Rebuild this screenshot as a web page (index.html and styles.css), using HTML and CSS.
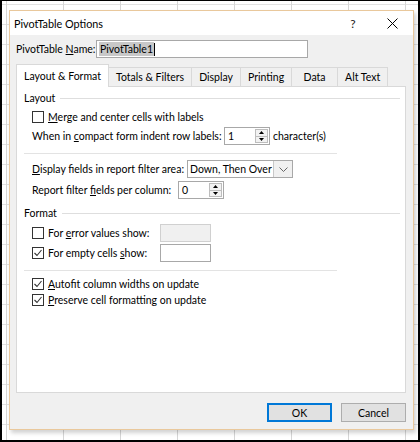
FILE: index.html
```html
<!DOCTYPE html>
<html>
<head>
<meta charset="utf-8">
<title>PivotTable Options</title>
<link rel="stylesheet" href="styles.css">
</head>
<body>
<div class="screen">
  <div class="dialog">
    <div class="titlebar">
      <span class="title">PivotTable Options</span>
      <span class="help">?</span>
      <svg class="close" width="11" height="11" viewBox="0 0 11 11"><path d="M0.5 0.5 L10.5 10.5 M10.5 0.5 L0.5 10.5" stroke="#000" stroke-width="1" fill="none"/></svg>
    </div>
    <div class="body">
      <div class="name-row">
        <span class="name-label">PivotTable <u>N</u>ame:</span>
        <div class="textbox name-box"><span class="sel">PivotTable1</span><span class="caret"></span></div>
      </div>
      <div class="tabs">
        <div class="tab active">Layout &amp; Format</div>
        <div class="tab">Totals &amp; Filters</div>
        <div class="tab">Display</div>
        <div class="tab">Printing</div>
        <div class="tab">Data</div>
        <div class="tab">Alt Text</div>
      </div>
      <div class="panel">
        <div class="group"><span>Layout</span><span class="group-line"></span></div>
        <div class="row indent merge-row">
          <span class="checkbox"></span><span class="cb-label"><u>M</u>erge and center cells with labels</span>
        </div>
        <div class="row indent compact-row">
          <span class="field-label w-compact">When in <u>c</u>ompact form indent row labels:</span>
          <div class="spin"><span class="spin-val">1</span><span class="spin-btns"><span class="spin-btn"><svg width="5" height="3" viewBox="0 0 5 3"><path d="M0 3 L2.5 0 L5 3 Z" fill="#000"/></svg></span><span class="spin-btn"><svg width="5" height="3" viewBox="0 0 5 3"><path d="M0 0 L2.5 3 L5 0 Z" fill="#000"/></svg></span></span></div>
          <span class="after">character(s)</span>
        </div>
        <div class="sep"></div>
        <div class="row indent display-row">
          <span class="field-label w-display"><u>D</u>isplay fields in report filter area:</span>
          <div class="combo"><span class="combo-val">Down, Then Over</span><span class="combo-btn"><svg width="9" height="5" viewBox="0 0 9 5"><path d="M0.5 0.5 L4.5 4.5 L8.5 0.5" stroke="#666" stroke-width="1" fill="none"/></svg></span></div>
        </div>
        <div class="row indent report-row">
          <span class="field-label w-report">Report filter <u>f</u>ields per column:</span>
          <div class="spin"><span class="spin-val">0</span><span class="spin-btns"><span class="spin-btn"><svg width="5" height="3" viewBox="0 0 5 3"><path d="M0 3 L2.5 0 L5 3 Z" fill="#000"/></svg></span><span class="spin-btn"><svg width="5" height="3" viewBox="0 0 5 3"><path d="M0 0 L2.5 3 L5 0 Z" fill="#000"/></svg></span></span></div>
        </div>
        <div class="group format-group"><span>Format</span><span class="group-line"></span></div>
        <div class="row indent error-row">
          <span class="checkbox"></span><span class="cb-label w-cb">For <u>e</u>rror values show:</span>
          <div class="textbox small-box disabled"></div>
        </div>
        <div class="row indent empty-row">
          <span class="checkbox checked"><svg width="10" height="10" viewBox="0 0 10 10"><path d="M1.5 5 L4 7.5 L8.5 2" stroke="#333" stroke-width="1.1" fill="none"/></svg></span><span class="cb-label w-cb">For empty cells <u>s</u>how:</span>
          <div class="textbox small-box"></div>
        </div>
        <div class="sep sep2"></div>
        <div class="row indent short-row autofit-row">
          <span class="checkbox checked"><svg width="10" height="10" viewBox="0 0 10 10"><path d="M1.5 5 L4 7.5 L8.5 2" stroke="#333" stroke-width="1.1" fill="none"/></svg></span><span class="cb-label"><u>A</u>utofit column widths on update</span>
        </div>
        <div class="row indent short-row">
          <span class="checkbox checked"><svg width="10" height="10" viewBox="0 0 10 10"><path d="M1.5 5 L4 7.5 L8.5 2" stroke="#333" stroke-width="1.1" fill="none"/></svg></span><span class="cb-label"><u>P</u>reserve cell formatting on update</span>
        </div>
      </div>
      <div class="buttons">
        <div class="btn default">OK</div>
        <div class="btn">Cancel</div>
      </div>
    </div>
  </div>
</div>
</body>
</html>
```

FILE: styles.css
```css
* { box-sizing: border-box; }
html, body { margin: 0; padding: 0; }
body {
  width: 420px;
  height: 442px;
  font-family: Lato, "Segoe UI", sans-serif;
  font-size: 10.5px;
  color: #000;
  overflow: hidden;
  white-space: nowrap;
}
u { text-decoration: underline; text-underline-offset: 1px; }

.screen {
  width: 420px;
  height: 442px;
  border: solid #000;
  border-width: 1px 2px 2px 2px;
  background-color: #fff;
  background-image:
    linear-gradient(to right, #d6d6d6 1px, transparent 1px),
    linear-gradient(to bottom, #e2e2e2 1px, transparent 1px);
  background-size: 57px 100%, 100% 20px;
  background-position: 4px 0, 0 3px;
  padding: 9px 0 0 7px;
}

.dialog {
  width: 405px;
  height: 420px;
  border: 1px solid #e9c89c;
  background: #f0f0f0;
  box-shadow: 2px 3px 4px rgba(0, 0, 0, 0.18);
  display: flex;
  flex-direction: column;
}

.titlebar {
  height: 24px;
  background: #fff;
  display: flex;
  align-items: center;
  padding-left: 4px;
  flex: none;
}
.title { flex: 1; font-size: 10.8px; }
.help { width: 16px; text-align: center; font-size: 12px; color: #222; margin-right: 26px; }
.close { margin-right: 15px; }

.body {
  flex: 1;
  display: flex;
  flex-direction: column;
  padding: 5px 7px 7px 6px;
}

.name-row { display: flex; align-items: center; height: 18px; }
.name-label { width: 80px; }
.textbox {
  height: 18px;
  border: 1px solid #a8a8a8;
  background: #fff;
  display: flex;
  align-items: center;
}
.name-box { width: 212px; padding-left: 2px; }
.sel { background: #c8c8c8; padding: 0 1px; line-height: 14px; }
.caret { width: 1px; height: 13px; background: #000; }

.tabs {
  display: flex;
  align-items: flex-end;
  margin-top: 6px;
  height: 23px;
  border-bottom: 1px solid #d9d9d9;
  flex: none;
}
.tab {
  height: 19px;
  min-width: 47px;
  border: 1px solid #d9d9d9;
  border-bottom: none;
  margin-left: -1px;
  padding: 0 7px;
  display: flex;
  align-items: center;
  justify-content: center;
  background: #f0f0f0;
}
.tab.active {
  height: 23px;
  margin-left: 0;
  margin-bottom: -1px;
  background: #fff;
}

.panel {
  flex: none;
  height: 306px;
  background: #fff;
  border: 1px solid #d9d9d9;
  border-top: none;
  padding: 3px 5px 0 7px;
}

.group { display: flex; align-items: center; height: 16px; gap: 5px; }
.group-line { flex: 1; height: 1px; background: #dedede; }
.format-group { margin-top: 6px; }

.row { display: flex; align-items: center; height: 18px; }
.indent { padding-left: 8px; }
.merge-row { margin-top: 2px; }
.compact-row { height: 20px; }
.display-row { margin-top: 6px; }
.report-row { margin-top: 3px; }
.error-row { margin-top: 3px; }
.empty-row { margin-top: 2px; }
.short-row { height: 16px; }
.autofit-row { margin-top: 5px; }

.checkbox {
  width: 12px;
  height: 12px;
  border: 1px solid #333;
  background: #fff;
  display: flex;
  align-items: center;
  justify-content: center;
  flex: none;
}
.cb-label { margin-left: 4px; }
.w-cb { width: 112px; }

.field-label { flex: none; }
.w-compact { width: 192px; }
.w-display { width: 155px; }
.w-report { width: 146px; }

.spin {
  width: 46px;
  height: 18px;
  border: 1px solid #a8a8a8;
  background: #fff;
  display: flex;
  align-items: center;
  padding-right: 1px;
}
.spin-val { flex: 1; padding-left: 3px; }
.spin-btns { display: flex; flex-direction: column; width: 13px; height: 14px; }
.spin-btn {
  flex: 1;
  background: #f2f2f2;
  border: 1px solid #bdbdbd;
  display: flex;
  align-items: center;
  justify-content: center;
}
.spin-btn + .spin-btn { border-top: none; }
.after { margin-left: 3px; }

.combo {
  width: 106px;
  height: 18px;
  border: 1px solid #a8a8a8;
  background: #fff;
  display: flex;
}
.combo-val { flex: 1; padding-left: 2px; display: flex; align-items: center; }
.combo-btn {
  width: 19px;
  border-left: 1px solid #c8c8c8;
  background: #f0f0f0;
  display: flex;
  align-items: center;
  justify-content: center;
}

.sep { height: 1px; width: 313px; background: #e3e3e3; margin-top: 7px; }
.sep2 { margin-top: 8px; }

.small-box { width: 51px; }
.small-box.disabled { background: #f0f0f0; border-color: #d0d0d0; }

.buttons {
  display: flex;
  justify-content: flex-end;
  gap: 9px;
  margin-top: 10px;
}
.btn {
  width: 65px;
  height: 19px;
  background: #e1e1e1;
  border: 1px solid #adadad;
  display: flex;
  align-items: center;
  justify-content: center;
}
.btn.default { border: 2px solid #0078d7; }
```
